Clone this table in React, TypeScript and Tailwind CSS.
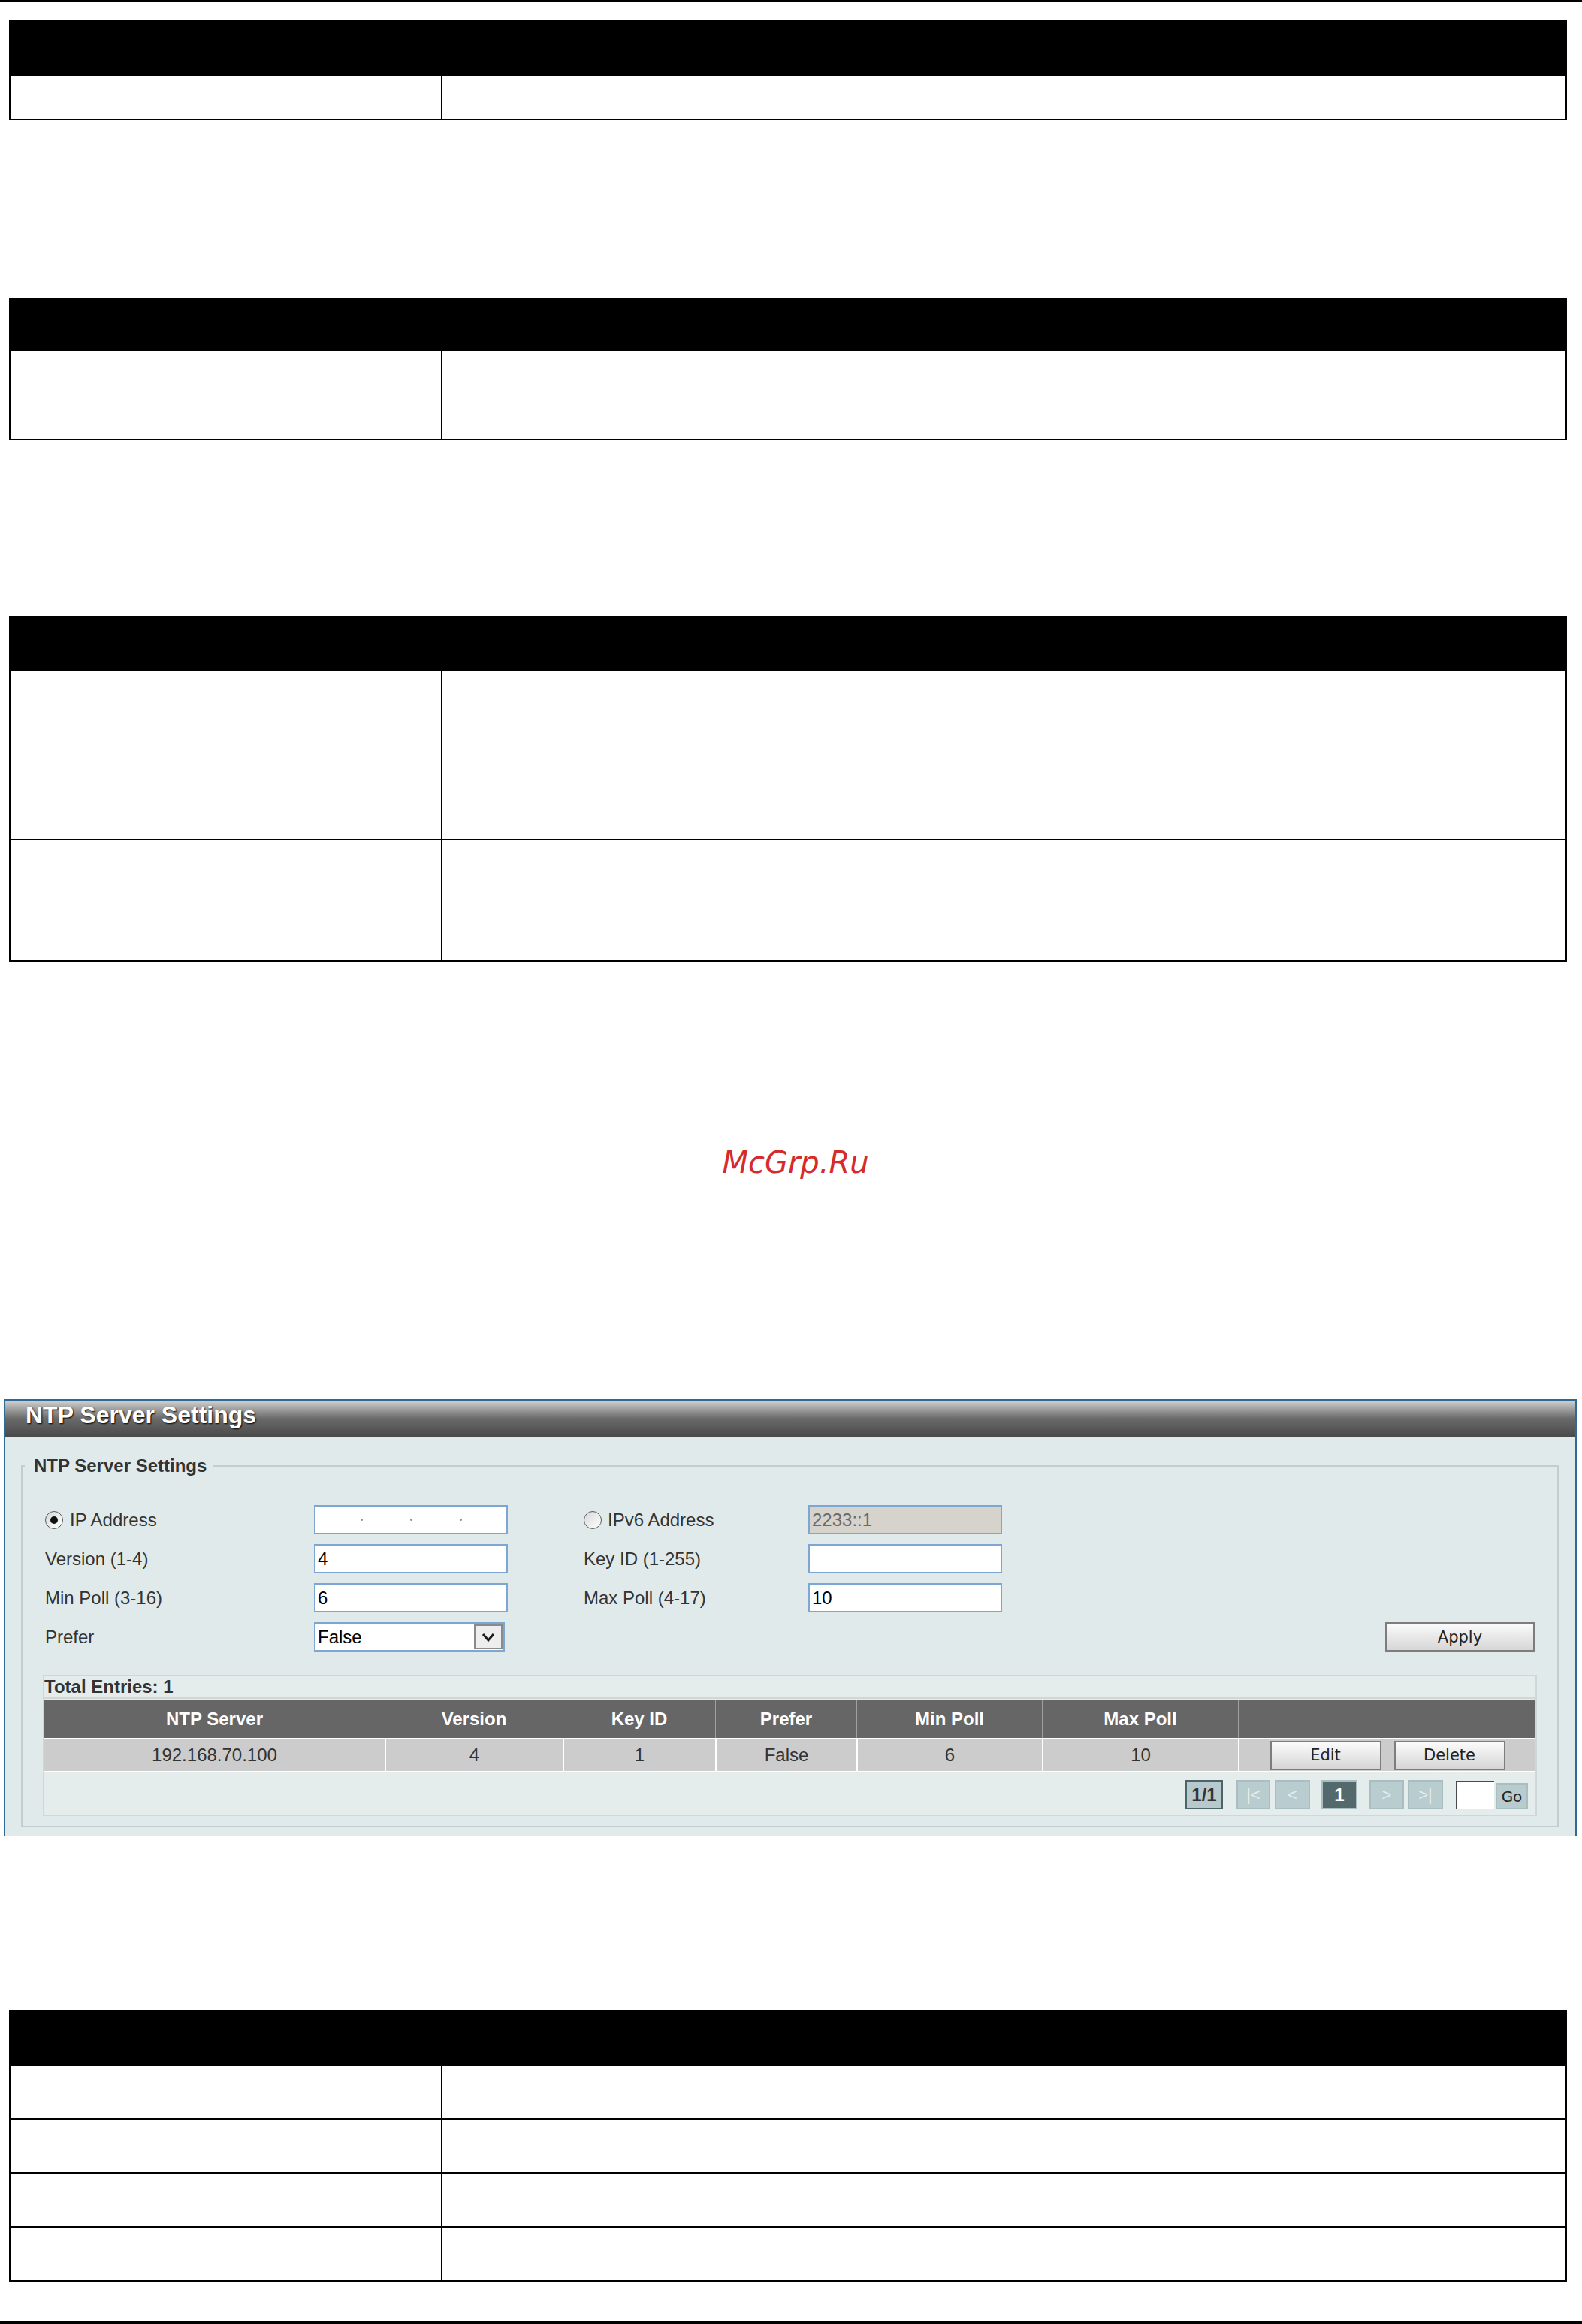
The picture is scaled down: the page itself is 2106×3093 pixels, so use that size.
import React from 'react';

// black-header documentation tables that frame the screenshot
interface DocTableProps {
	top: string;
	header: string;
	rows: string[];
}

function DocTable({ top, header, rows }: DocTableProps) {
	return (
		<div className={`${top} ml-[12px] w-[2074px] border-2 border-black`}>
			<div className={`${header} bg-black`} />
			{rows.map((h, i) => (
				<div
					key={i}
					className={`grid grid-cols-[575px_1fr] ${h} ${i > 0 ? 'border-t-2 border-black' : ''}`}
				>
					<div className="border-r-2 border-black" />
					<div />
				</div>
			))}
		</div>
	);
}

function Radio({ checked }: { checked?: boolean }) {
	return (
		<span className="flex h-[24px] w-[24px] shrink-0 items-center justify-center rounded-full border border-[#5a5a5a] bg-gradient-to-br from-[#d8d8d8] to-white">
			{checked && <span className="h-[10px] w-[10px] rounded-full bg-[#111]" />}
		</span>
	);
}

function TextBox({ value, disabled }: { value?: string; disabled?: boolean }) {
	return (
		<div
			className={`flex h-[39px] w-[258px] items-center border-2 border-[#7ea6d3] pl-[3px] text-[24px] ${
				disabled ? 'bg-[#d6d2cc] text-[#6b6b6b]' : 'bg-white text-black'
			}`}
		>
			{value}
		</div>
	);
}

function GrayButton({ label, width }: { label: string; width: string }) {
	return (
		<div
			className={`${width} flex h-[39px] items-center justify-center border-2 border-[#7d7d7d] bg-gradient-to-b from-[#fbfbfb] to-[#d6d6d6] pt-[2px] font-['DejaVu_Sans',Verdana,sans-serif] text-[21px] text-[#222]`}
		>
			{label}
		</div>
	);
}

function PageBtn({ label, width, ml }: { label: string; width: string; ml: string }) {
	return (
		<div
			className={`${width} ${ml} flex h-[39px] items-center justify-center border-2 border-[#a9bec1] bg-[#b9cdd0] text-[22px] text-[#e4eded]`}
		>
			{label}
		</div>
	);
}

const columns = [
	{ title: 'NTP Server', value: '192.168.70.100' },
	{ title: 'Version', value: '4' },
	{ title: 'Key ID', value: '1' },
	{ title: 'Prefer', value: 'False' },
	{ title: 'Min Poll', value: '6' },
	{ title: 'Max Poll', value: '10' },
];

function NtpPanel() {
	return (
		<div className="ml-[5px] mt-[291px] w-[2094px] border-x-2 border-t-2 border-[#2d6a96]">
			{/* Title bar */}
			<div className="h-[48px] bg-gradient-to-b from-[#d2d2d2] via-[#6a6a6a] to-[#4a4a4a] pl-[27px] pt-[1px]">
				<span className="text-[32px] font-bold leading-[37px] text-white [text-shadow:1px_1px_2px_#000]">
					NTP Server Settings
				</span>
			</div>

			<div className="bg-[#e1eaea] pb-[11px] pt-[25px]">
				<fieldset className="ml-[21px] mr-[22px] border-2 border-[#c3cdcd]">
					<legend className="ml-[3px] pl-[12px] pr-[9px] text-[24px] font-bold leading-[28px] text-[#333]">
						NTP Server Settings
					</legend>

					{/* Form rows */}
					<div className="flex flex-col gap-[13px] pl-[30px] pr-[30px] pt-[38px] text-[24px] text-[#333]">
						<div className="flex h-[39px] items-center">
							<div className="flex w-[358px] items-center gap-[9px]">
								<Radio checked />
								<span>IP Address</span>
							</div>
							<div className="flex h-[39px] w-[258px] items-center gap-[63px] border-2 border-[#7ea6d3] bg-white pl-[60px]">
								<span className="h-[3px] w-[3px] rounded-full bg-[#8c8c8c]" />
								<span className="h-[3px] w-[3px] rounded-full bg-[#8c8c8c]" />
								<span className="h-[3px] w-[3px] rounded-full bg-[#8c8c8c]" />
							</div>
							<div className="w-[101px]" />
							<div className="flex w-[299px] items-center gap-[8px]">
								<Radio />
								<span>IPv6 Address</span>
							</div>
							<TextBox value="2233::1" disabled />
						</div>

						<div className="flex h-[39px] items-center">
							<div className="w-[358px]">Version (1-4)</div>
							<TextBox value="4" />
							<div className="w-[101px]" />
							<div className="w-[299px]">Key ID (1-255)</div>
							<TextBox />
						</div>

						<div className="flex h-[39px] items-center">
							<div className="w-[358px]">Min Poll (3-16)</div>
							<TextBox value="6" />
							<div className="w-[101px]" />
							<div className="w-[299px]">Max Poll (4-17)</div>
							<TextBox value="10" />
						</div>

						<div className="flex h-[39px] items-center justify-between">
							<div className="flex items-center">
								<div className="w-[358px]">Prefer</div>
								<div className="flex h-[39px] w-[254px] items-center justify-between border-2 border-[#7ea6d3] bg-white pl-[3px] pr-[1px] text-black">
									<span>False</span>
									<span className="flex h-[33px] w-[38px] items-center justify-center border-2 border-[#8a8a8a] bg-[#eeeeee]">
										<svg width="22" height="16" viewBox="0 0 22 16">
											<path d="M4 4 L11 12 L18 4" fill="none" stroke="#1a1a1a" strokeWidth="3" />
										</svg>
									</span>
								</div>
							</div>
							<GrayButton label="Apply" width="w-[199px]" />
						</div>
					</div>

					{/* Entries table */}
					<div className="mx-[27px] mb-[13px] mt-[31px] border-2 border-[#cfd7d7] bg-[#e4ecec]">
						<div className="flex h-[30px] items-center border-b-2 border-[#cfd7d7] text-[24px] font-bold text-[#333]">
							Total Entries: 1
						</div>
						<div className="mt-[2px] grid grid-cols-[453px_237px_203px_188px_247px_261px_1fr]">
							{columns.map((c, i) => (
								<div
									key={c.title}
									className={`flex h-[50px] items-center justify-center bg-[#666666] text-[24px] font-bold text-white ${
										i > 0 ? 'border-l border-[#a0a0a0]' : ''
									}`}
								>
									{c.title}
								</div>
							))}
							<div className="h-[50px] border-l border-[#a0a0a0] bg-[#666666]" />
							{columns.map((c, i) => (
								<div
									key={c.value + i}
									className={`flex h-[46px] items-center justify-center border-b-2 border-t-2 border-white bg-[#cccccc] text-[24px] text-[#333] ${
										i > 0 ? 'border-l-2' : ''
									}`}
								>
									{c.value}
								</div>
							))}
							<div className="flex h-[46px] items-center justify-center gap-[17px] border-b-2 border-l-2 border-t-2 border-white bg-[#cccccc]">
								<GrayButton label="Edit" width="w-[148px]" />
								<GrayButton label="Delete" width="w-[148px]" />
							</div>
						</div>

						{/* Pager */}
						<div className="flex items-start justify-end pb-[7px] pr-[10px] pt-[10px]">
							<div className="flex h-[39px] w-[50px] items-center justify-center border-2 border-[#4b6467] bg-[#b7c9cc] text-[24px] font-bold text-[#333]">
								1/1
							</div>
							<PageBtn label="|<" width="w-[45px]" ml="ml-[18px]" />
							<PageBtn label="<" width="w-[47px]" ml="ml-[6px]" />
							<div className="ml-[15px] flex h-[39px] w-[48px] items-center justify-center border-2 border-[#a9bec1] bg-[#53696c] text-[24px] font-bold text-white">
								1
							</div>
							<PageBtn label=">" width="w-[46px]" ml="ml-[16px]" />
							<PageBtn label=">|" width="w-[47px]" ml="ml-[5px]" />
							<div className="ml-[17px] mt-[1px] h-[38px] w-[51px] border-l-2 border-t-2 border-[#4a4a4a] bg-white" />
							<div className="ml-[2px] mt-[4px] flex h-[35px] w-[43px] items-center justify-center border-2 border-[#a9bec1] bg-[#b8cccf] font-['DejaVu_Sans',Verdana,sans-serif] text-[20px] text-[#222]">
								Go
							</div>
						</div>
					</div>
				</fieldset>
			</div>
		</div>
	);
}

export default function App() {
	return (
		<div className="h-[3093px] w-[2106px] overflow-hidden bg-white font-['Liberation_Sans',Arial,sans-serif]">
			<div className="h-[3px] bg-black" />

			<DocTable top="mt-[24px]" header="h-[72px]" rows={['h-[57px]']} />
			<DocTable top="mt-[236px]" header="h-[69px]" rows={['h-[117px]']} />
			<DocTable top="mt-[234px]" header="h-[71px]" rows={['h-[223px]', 'h-[162px]']} />

			{/* Watermark */}
			<div className="mt-[243px] flex h-[48px] items-center justify-center pl-[12px] font-['DejaVu_Sans',sans-serif] text-[40px] italic leading-[48px] text-[#d52b2b]">
				McGrp.Ru
			</div>

			<NtpPanel />

			<DocTable
				top="mt-[232px]"
				header="h-[72px]"
				rows={['h-[70px]', 'h-[72px]', 'h-[72px]', 'h-[72px]']}
			/>

			<div className="mt-[52px] h-[4px] bg-black" />
		</div>
	);
}
